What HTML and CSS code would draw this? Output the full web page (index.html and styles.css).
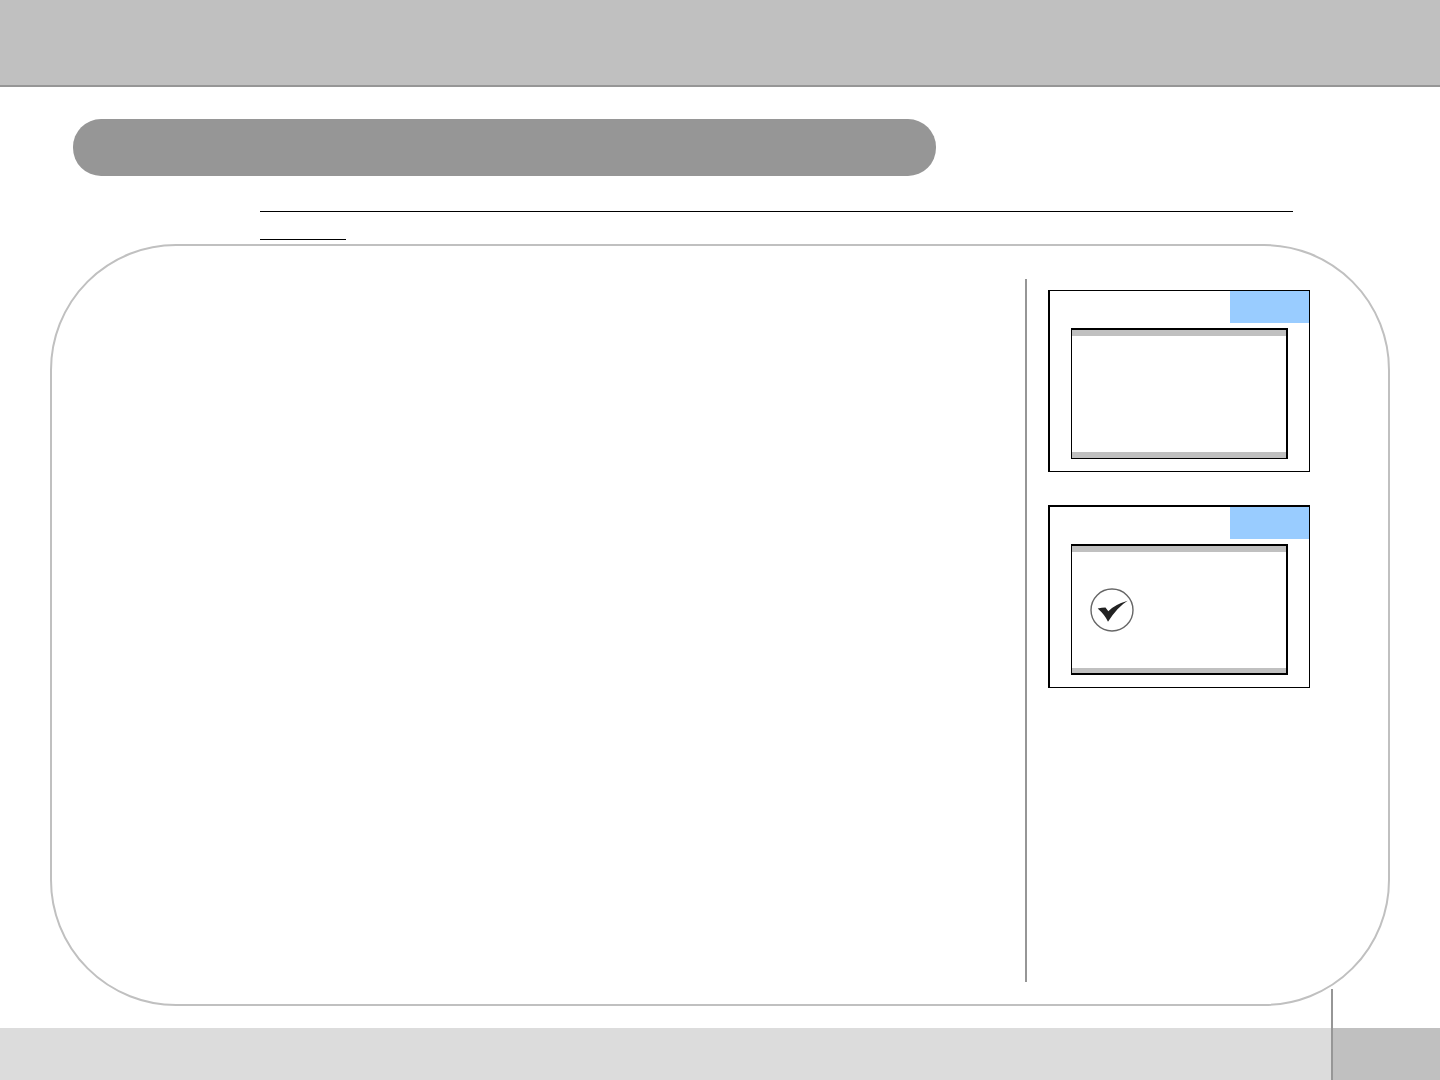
FILE: index.html
```html
<!DOCTYPE html>
<html lang="en">
<head>
  <meta charset="UTF-8">
  <meta name="viewport" content="width=device-width, initial-scale=1.0">
  <title>Slide</title>
  <link rel="stylesheet" href="styles.css">
</head>
<body>
  <div class="top-bar"></div>
  <div class="title-pill"></div>

  <div class="title-rules">
    <div class="rule rule-long"></div>
    <div class="rule rule-short"></div>
  </div>

  <div class="content-box">
    <div class="main-area"></div>
    <div class="divider"></div>
    <div class="side-area">
      <div class="panel">
        <div class="panel-tag"></div>
        <div class="screen">
          <div class="screen-bar"></div>
          <div class="screen-body"></div>
          <div class="screen-bar"></div>
        </div>
      </div>

      <div class="panel panel-second">
        <div class="panel-tag"></div>
        <div class="screen screen-second">
          <div class="screen-bar"></div>
          <div class="screen-body">
            <svg class="check-icon" viewBox="0 0 44 44" width="44" height="44">
              <circle cx="22" cy="22" r="21" fill="#fff" stroke="#666" stroke-width="1.4"/>
              <path d="M7.7 20.5 Q12 19.5 15.5 19.5 L18.3 23.2 Q25 16.5 37.7 12.8 Q28 18.5 18 33.7 Q15 27 7.7 20.5 Z" fill="#222"/>
            </svg>
          </div>
          <div class="screen-bar screen-bar-low"></div>
        </div>
      </div>
    </div>
  </div>

  <div class="bottom-bar">
    <div class="bottom-left"></div>
    <div class="bottom-right"></div>
    <div class="bottom-line"></div>
  </div>
</body>
</html>
```

FILE: styles.css
```css
* {
  box-sizing: border-box;
}
body {
  margin: 0;
  height: 1080px;
  overflow: hidden;
  background-color: #fff;
  font-family: "Liberation Sans", Arial, sans-serif;
}
.top-bar {
  height: 87px;
  background-color: #c0c0c0;
  border-bottom: 2px solid #969696;
}
.title-pill {
  width: 863px;
  height: 57px;
  margin: 32px 0 0 73px;
  border-radius: 28px;
  background-color: #969696;
}
.title-rules {
  margin: 35px 0 0 260px;
}
.rule {
  height: 1px;
  background-color: #000;
}
.rule-long {
  width: 1033px;
}
.rule-short {
  width: 86px;
  margin-top: 27px;
}
.content-box {
  display: flex;
  width: 1340px;
  height: 762px;
  margin: 4px 0 0 50px;
  padding-top: 33px;
  border: 2px solid #c0c0c0;
  border-radius: 126px;
}
.main-area {
  width: 973px;
}
.divider {
  width: 2px;
  height: 703px;
  background-color: #969696;
}
.side-area {
  margin-left: 21px;
  padding-top: 11px;
}
.panel {
  width: 262px;
  height: 182px;
  border: 1px solid #000;
  border-left-width: 2px;
}
.panel-second {
  height: 183px;
  margin-top: 33px;
  border-top-width: 2px;
}
.panel-tag {
  width: 79px;
  height: 32px;
  margin-left: auto;
  background-color: #99ccff;
}
.screen {
  display: flex;
  flex-direction: column;
  width: 217px;
  height: 131px;
  margin: 5px 0 0 21px;
  border: 2px solid #000;
  border-left-width: 1px;
  border-bottom-width: 1px;
}
.screen-second {
  border-bottom-width: 2px;
}
.screen-bar {
  height: 6px;
  background-color: #c0c0c0;
}
.screen-bar-low {
  height: 5px;
}
.screen-body {
  display: flex;
  flex: 1;
  align-items: center;
  padding-left: 18px;
}
.check-icon {
  filter: blur(0.4px);
}
.bottom-bar {
  position: relative;
  display: flex;
  height: 52px;
  margin-top: 22px;
}
.bottom-left {
  width: 1332px;
  background-color: #dcdcdc;
}
.bottom-right {
  flex: 1;
  background-color: #c0c0c0;
}
.bottom-line {
  position: absolute;
  top: -39px;
  bottom: 0;
  left: 1331px;
  width: 2px;
  background-color: #969696;
}
```
